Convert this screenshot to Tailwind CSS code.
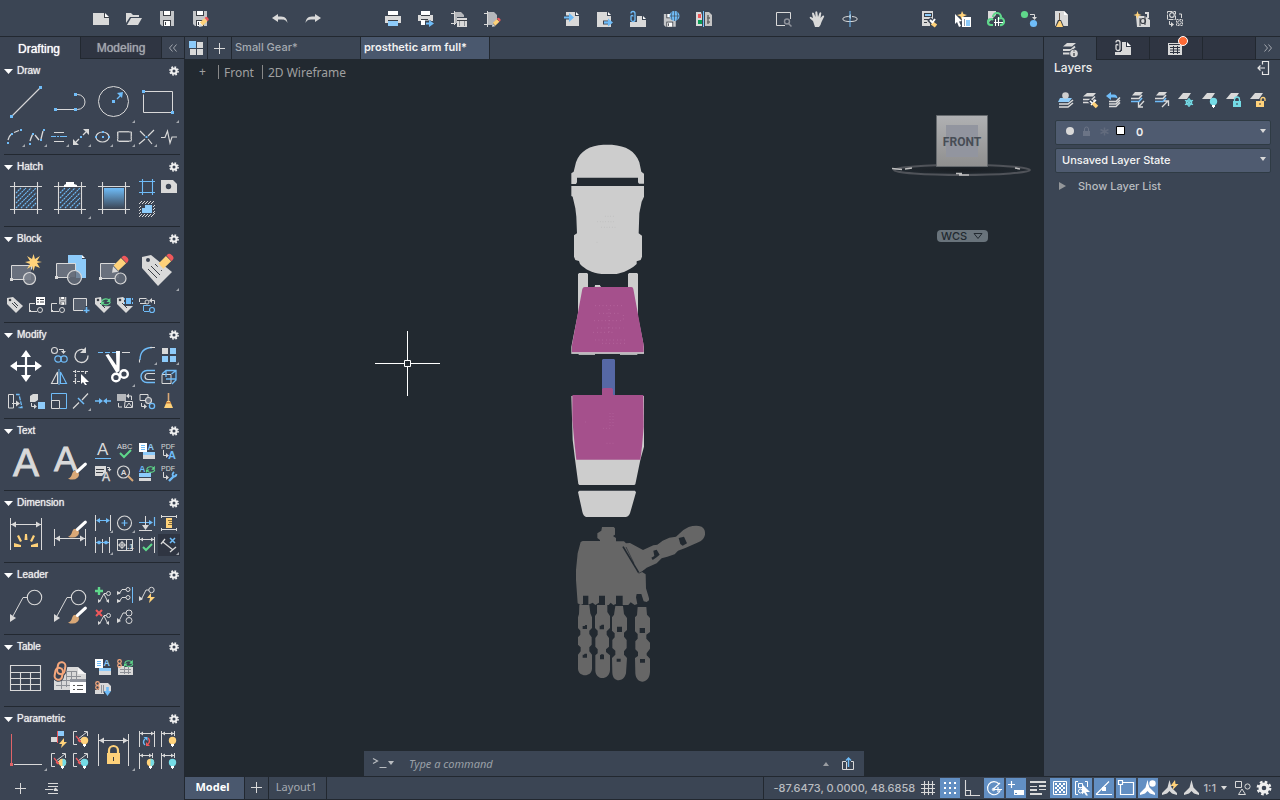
<!DOCTYPE html>
<html lang="en">
<head>
<meta charset="utf-8">
<meta name="viewport" content="width=device-width, initial-scale=1">
<title>prosthetic arm full</title>
<script src="https://cdn.jsdelivr.net/npm/@tailwindcss/browser@4"></script>
</head>
<body class="flex h-screen flex-col gap-px overflow-hidden bg-[#222830] font-['Inter','Liberation_Sans',sans-serif] text-[#d9d9d9]">

<!-- Main toolbar -->
<header id="toolbar" class="flex h-9 shrink-0 items-center justify-center gap-[47px] bg-[#3b4554] pt-0.5 pr-1"></header>

<div class="flex min-h-0 flex-1 gap-px">

  <!-- Tool palette -->
  <aside class="flex w-[184px] shrink-0 flex-col bg-[#3b4453]">
    <div class="flex h-[22px] shrink-0 font-['Liberation_Sans',sans-serif] text-xs">
      <button class="w-20 pt-px pr-0.5 text-center text-white [text-shadow:0_0_1px_#fff]">Drafting</button>
      <button class="w-[82px] border-x border-b border-[#222830] bg-[#2f3542] text-center text-[#a3a7ae] [text-shadow:0_0_1px_#a3a7ae]">Modeling</button>
      <button class="flex flex-1 items-center justify-center border-b border-[#222830]" aria-label="Collapse">
        <svg class="size-4" viewBox="0 0 16 16" fill="none" stroke="#a3a7ae"><path d="M7.500 4.500L4.500 8l3 3.500M11.500 4.500L8.500 8l3 3.500"/></svg>
      </button>
    </div>
    <div id="palette" class="flex min-h-0 flex-1 flex-col overflow-hidden px-1 font-['Liberation_Sans',sans-serif]"></div>
    <div class="flex h-6 shrink-0 items-center gap-4 bg-[#3b4453] pl-3">
      <button aria-label="Add"><svg class="size-4" viewBox="0 0 16 16" stroke="#d9d9d9"><path d="M8.500 3v11M3 8.500h11"/></svg></button>
      <button aria-label="Palette list"><svg class="size-4" viewBox="0 0 16 16" stroke="#d9d9d9" fill="#d9d9d9"><path d="M4 3.500h10M4 6.500h10M4 13.500h10M1 9.500h8M10 10.500h4"/><path stroke="none" d="M9 10h5l-2.500-2.500z"/></svg></button>
    </div>
  </aside>

  <div class="flex min-w-0 flex-1 flex-col gap-px">
    <div class="flex min-h-0 flex-1">
      <main class="flex min-w-0 flex-1 flex-col">
        <!-- File tabs -->
        <nav class="flex h-[22px] shrink-0 gap-px bg-[#222830] text-[11px]">
          <button class="flex w-[22px] items-center justify-center bg-[#3b4554]" aria-label="Start">
            <svg class="size-4" viewBox="0 0 16 16" fill="#d9d9d9"><path fill="#8dcbfa" d="M1 1h7v7H1z"/><path d="M9 2h6v6H9zM2 9h6v6H2zM9 9h6v6H9z"/></svg>
          </button>
          <button class="flex w-[23px] items-center justify-center bg-[#3b4554]" aria-label="New drawing">
            <svg class="size-4" viewBox="0 0 16 16" stroke="#d9d9d9"><path d="M7.500 3v11M2 8.500h11"/></svg>
          </button>
          <button class="w-32 bg-[#3b4554] pb-0.5 pl-[3px] text-left font-medium text-[#a5aab1]">Small Gear*</button>
          <button class="w-32 bg-[#4a586e] pb-0.5 pl-[3px] text-left font-semibold text-[#f2f2f2]">prosthetic arm full*</button>
          <div class="flex-1 bg-[#3b4554]"></div>
        </nav>

        <!-- Drawing canvas -->
        <section class="relative min-h-0 flex-1 bg-[#222930]">
          <div class="absolute top-1 left-3.5 flex h-[17px] items-center font-['Noto_Sans',sans-serif] text-xs text-[#a0a0a0]">
            <button class="w-[19px] text-left" aria-label="Viewport menu">+</button>
            <button class="h-3.5 border-l border-[#888] pr-2 pl-[5px] leading-[15px]">Front</button>
            <button class="h-3.5 border-l border-[#888] pl-[5px] leading-[15px]">2D Wireframe</button>
          </div>

          <svg class="absolute top-[272px] left-[190px] h-[66px] w-[66px]" viewBox="0 0 66 66" fill="none" stroke="#fff"><path d="M32.500 0v29M32.500 36v29M0 32.500h29M36 32.500h29M29.500 29.500h6v6h-6z"/></svg>

          <!-- Arm model -->
          <svg class="absolute top-[81px] left-[385px] h-[548px] w-[140px]" viewBox="570 140 140 548">
            <g transform="translate(540 130) scale(.33333)">
              <path fill="#cdcdcd" d="M94 130L101 125L108 97C120 62 150 46 190 44H216C258 48 286 62 298 97L304 125L312 131V161H297L294 157V143H111V157L108 162H94ZM94 168H312V200L305 215L298 250L296 310L306 317V380L302 390L290 394V402C265 425 235 432 225 432H185C155 428 135 418 120 402L117 393L106 390L102 380V316L111 310L109 260L106 235L98 200L94 198ZM114 432L118 429H141L144 432V475H162L165 465H180L184 472H264V432L268 429H291L294 432V560L312 650V670H94V650L114 550Z"/>
              <path fill="#222930" d="M144 432H264V472H184L180 465H165L162 473H144Z"/>
              <path fill="#a5508c" d="M134 471H274Q279 471 280 477L311 645V667H96V645L127 477Q129 471 134 471Z"/>
              <path stroke="#cdcdcd" stroke-width="3" d="M94 670H312M116 673H165M240 673H292"/>
              <path stroke="#c47bb1" stroke-width="2" stroke-dasharray="2 9" d="M166 527H250M178 550H240M163 572H250M172 594H250M160 607H220M165 630H260M207 537V610M250 555V570M186 640H260"/>
              <path fill="#5668a5" d="M186 690L189 687H222L225 690V800H186Z"/>
              <path fill="#a5508c" d="M186 777L190 774H215L219 778V800H186Z"/>
              <path stroke="#b5b5b5" stroke-width="2" stroke-dasharray="2 6" d="M195 259H222M172 275H225M184 292H228M170 337H178"/>
            </g>
            <g transform="translate(540 380) scale(.33333)">
              <path fill="#cdcdcd" d="M94 48H312V200L301 240L286 313L283 315H118L115 312L105 238L98 180ZM114 336L118 332H285L288 337L270 400Q266 411 256 411H138Q130 408 127 395Z"/>
              <path fill="#a5508c" d="M98 45H310L311 140L306 200L301 239H109L104 195L97 120V47Z"/>
              <path stroke="#bd73a8" stroke-width="2" stroke-dasharray="2 7" d="M210 99V140M219 99V140M190 145H215M200 190H222M136 126H145"/>
              <g fill="#666">
                <path d="M186 441H221L225 445V464L219 468L228 474V484H252L258 490L270 489L309 510L340 496L352 494L368 482L388 473L408 470L430 450L446 441Q468 434 485 440Q497 448 495 464Q492 480 475 487L436 504L414 512L404 523L382 530L365 535L350 550L320 563L305 575L317 583L318 625L327 655V661L320 666L311 664L304 642L290 642L288 652L292 672L284 675L272 667L265 675H248V647H228V672L220 675L212 668L206 675H195V647H177V668L166 675L158 668L145 674V647H129V672L122 675L113 670L108 600V570L113 520L122 486L128 483H180V480L172 474V460L184 452Z"/>
                <path d="M118 675H148L151 700L156 712V744L148 752V762L155 772V794L148 802V814L156 824V866C155 892 115 892 114 866V824L122 814V802L114 794V772L121 764V752L114 744V712L117 702ZM171 675H202V696L210 708V744L200 754V764L207 774V800L198 808V816L210 826V870C208 902 168 902 166 872V826L173 820V808L166 800V774L173 764V752L165 744V708L171 700ZM226 678H249L252 702L261 714V750L252 758V770L260 780V804L252 814V824L261 834L258 880C252 908 218 908 217 878L216 834L226 824V812L217 804V780L224 772V760L216 752V712L222 704ZM293 681H319L321 704L330 714V756L319 764V776L330 788V806L320 820V826L330 836V876C328 914 288 914 286 880L285 834L294 828V816L286 808V784L293 776V762L285 754V712L291 706Z"/>
              </g>
              <path fill="#222930" d="M128 738h6l2-3h5v12h-13zM179 737h4l2-3h7v14h-13zM231 740h15v16h-15zM299 744h16v15h-16zM128 824h4l2-3h7v12h-13zM180 826l4-3h6l2 3v12h-12zM230 836h12v9h-12zM300 837h15v11h-15zM416 474L432 470L441 490L428 497L421 492ZM340 512L350 509L359 524L350 532L338 540L334 533L343 528Z"/>
              <path stroke="#222930" stroke-width="5" d="M249 500L296 578"/>
              <path stroke="#222930" stroke-width="2" d="M258 501L282 550M296 580L352 553"/>
            </g>
          </svg>

          <!-- View cube -->
          <svg class="absolute top-[54px] right-2.5 h-[68px] w-[142px]" viewBox="0 0 142 68">
            <defs><linearGradient id="cube" x1="0" y1="0" x2="0" y2="1"><stop offset="0" stop-color="#b0b1b3"/><stop offset="1" stop-color="#8f8f8f"/></linearGradient>
            <radialGradient id="shade"><stop offset="0" stop-color="#1a1e23"/><stop offset="1" stop-color="#222930"/></radialGradient></defs>
            <ellipse cx="71" cy="57" rx="68" ry="5" fill="url(#shade)" stroke="#505359" stroke-width="2"/>
            <path stroke="#bdbdbd" stroke-width="1.500" d="M1 55.500l10 1M14 56l7-1M68 62h10M65 60.500h6M124 55l5 1"/>
            <path fill="url(#cube)" stroke="#666a6e" d="M45.500 2.500h51v51h-51z"/>
            <path fill="#92959f" d="M55 12h32v32H55z"/>
            <text x="71" y="33" text-anchor="middle" font-family="Roboto, sans-serif" font-size="12" font-weight="700" fill="#474d55">FRONT</text>
          </svg>
          <button class="absolute top-[171px] right-[55px] flex h-3 w-[51px] items-center justify-between rounded bg-[#69737b] pr-1 pl-1 text-[11px] font-medium text-[#222930]">WCS
            <svg class="h-2 w-3" viewBox="0 0 12 8" fill="none" stroke="#222930"><path d="M2 1.500h8L6 6.500z"/></svg>
          </button>

          <!-- Command line -->
          <div class="absolute bottom-0 left-1/2 flex h-[25px] w-[500px] -translate-x-1/2 items-center bg-[#3b4554] pr-2 pl-2">
            <button aria-label="Recent commands"><svg class="h-4 w-6" viewBox="0 0 24 16" fill="none" stroke="#b9bcc0"><path d="M1 2.500l4.500 2.500L1 7.500M7.500 11.500h7" stroke-width="1.200"/><path fill="#b9bcc0" stroke="none" d="M16 5h6l-3 4z"/></svg></button>
            <input aria-label="Command" placeholder="Type a command" class="ml-3 min-w-0 flex-1 bg-transparent pt-0.5 pl-px font-['Noto_Sans',sans-serif] text-[11px] italic outline-none placeholder:text-[#9aa0a7]">
            <button class="mr-2.5" aria-label="History"><svg class="h-2 w-2" viewBox="0 0 8 8" fill="#9a9da2"><path d="M1 6h6L4 2z"/></svg></button>
            <button aria-label="Share"><svg class="size-4" viewBox="0 0 16 16" fill="none" stroke="#d9d9d9"><path d="M6 5.500H2.500v8h11v-8H11M6.500 6v8"/><path stroke="#6fbcf8" stroke-width="1.400" d="M8.500 11V2M6 4.500L8.500 2 11 4.500"/></svg></button>
          </div>
        </section>
      </main>

      <!-- Layers panel -->
      <aside class="flex w-[237px] shrink-0 flex-col border-l border-[#222830] bg-[#3b4554]">
        <div class="flex h-[23px] shrink-0">
          <button class="flex w-[52px] items-center justify-center pt-0.5" data-icon="layerInfo" aria-label="Layers"></button>
          <button class="flex w-[53px] items-center justify-center border-b border-l border-[#222830] bg-[#2f3542]" data-icon="refs" aria-label="References"></button>
          <button class="relative flex w-[53px] items-center justify-center border-b border-l border-[#222830] bg-[#2f3542] pr-0.5" data-icon="sheet" aria-label="Sheets"></button>
          <div class="flex-1 border-b border-l border-[#222830] bg-[#2f3542]"></div>
          <button class="flex w-[25px] items-center justify-center border-b border-l border-[#222830]" aria-label="More">
            <svg class="size-4" viewBox="0 0 16 16" fill="none" stroke="#a3a7ae"><path d="M4.500 4.500L7.500 8l-3 3.500M8.500 4.500l3 3.500-3 3.500"/></svg>
          </button>
        </div>
        <div class="flex h-4 items-center justify-between pr-[9px] pl-2.5">
          <h2 class="text-xs font-medium text-[#ececec]">Layers</h2>
          <button aria-label="Undock"><svg class="size-4" viewBox="0 0 16 16" fill="none" stroke="#e6e6e6"><path d="M7.500 4.500V1.500H13.500v13H7.500V11.500M3 8H10M5.500 5.500L3 8 5.500 10.500" stroke-width="1.200"/></svg></button>
        </div>
        <div id="layerTools" class="mt-3 flex h-6 pl-2.5"></div>
        <div class="relative mt-1.5 mr-[9px] ml-[11px] h-[25px]">
          <select aria-label="Current layer" class="h-full w-full appearance-none rounded-xs border border-[#2f3b44] bg-[#4f5b70] pl-20 text-[11px] font-semibold text-[#f0f0f0]"><option>0</option></select>
          <svg class="pointer-events-none absolute top-[5px] left-2 h-4 w-16" viewBox="0 0 64 16" fill="none"><circle cx="7" cy="8" r="4" fill="#d9d9d9"/><path fill="#6b7486" d="M20 8h7v5h-7z"/><path stroke="#6b7486" d="M21.500 8V6a2 2 0 0 1 4 0v2"/><path stroke="#626b7d" stroke-width="1.500" d="M41.500 4.500v8M37.500 6.500l8 4M37.500 10.500l8-4"/><path fill="#fff" stroke="#000" d="M53.500 3.500h8v8h-8z"/></svg>
          <svg class="pointer-events-none absolute top-[11px] right-1 h-1.5 w-2" viewBox="0 0 8 6" fill="#d9d9d9"><path d="M1 0h6L4 4z"/></svg>
        </div>
        <div class="relative mt-[3px] mr-[9px] ml-[11px] h-[25px]">
          <select aria-label="Layer state" class="h-full w-full appearance-none rounded-xs border border-[#2f3b44] bg-[#4f5b70] pb-px pl-1.5 text-[11px] font-medium text-[#f5f5f5]"><option>Unsaved Layer State</option></select>
          <svg class="pointer-events-none absolute top-[11px] right-1 h-1.5 w-2" viewBox="0 0 8 6" fill="#d9d9d9"><path d="M1 0h6L4 4z"/></svg>
        </div>
        <button class="mt-1.5 flex h-[18px] items-center gap-3 pl-3.5 text-[11px] font-medium text-[#b9bcc0]">
          <svg class="size-2" viewBox="0 0 8 8" fill="#94979a"><path d="M1 0v8l7-4z"/></svg>Show Layer List
        </button>
      </aside>
    </div>

    <!-- Layout tabs and status bar -->
    <footer class="mb-px flex h-[22px] shrink-0 gap-px font-['Noto_Sans',sans-serif] text-[11px]">
      <button class="w-[59px] bg-[#4a586e] pr-1 pb-0.5 font-bold text-white">Model</button>
      <button class="flex w-[23px] items-center justify-center bg-[#3b4554]" aria-label="New layout"><svg class="size-4" viewBox="0 0 16 16" stroke="#d9d9d9"><path d="M7.500 2v11M2 7.500h11"/></svg></button>
      <button class="w-[57px] bg-[#3b4554] pr-0.5 pb-0.5 text-[#a5aab1]">Layout1</button>
      <div class="flex-1 bg-[#3b4554]"></div>
      <div class="flex items-center bg-[#3b4554] pr-2 pl-2.5 font-['Inter',sans-serif] font-medium text-[#b9bcc0]">
        <span class="w-[144px] whitespace-nowrap">-87.6473, 0.0000, 48.6858</span>
        <div id="status" class="flex gap-0.5"></div>
        <button class="mr-1.5 ml-0.5 flex items-center gap-1 text-[11px]">1:1<svg class="h-1.5 w-2" viewBox="0 0 8 6" fill="#d9d9d9"><path d="M1 1h6L4 5z"/></svg></button>
        <button class="mr-1.5" data-icon="shapes" aria-label="Isolate objects"></button>
        <button data-icon="gear16" aria-label="Customize"></button>
      </div>
    </footer>
  </div>
</div>

<script>
const W='#d9d9d9',B='#6fbcf8',P='#8dcbfa',Y='#ffd27a',G='#5fd88b',R='#f0585b',C='#74dbe6',D='#3b4453',H='#ffffff',M='#8e929b',K='#3b3f46',T='#d9a877',O='#f5a77c';
// Drawing primitives: filled path, stroked path, ring, disk, rectangle, text
const p=(c,d)=>`<path fill="${c}" d="${d}"/>`;
const s=(c,d,w=1,x='')=>`<path fill="none" stroke="${c}" stroke-width="${w}" d="${d}" ${x}/>`;
const o=(c,x,y,r,w=1,f='none')=>`<circle cx="${x}" cy="${y}" r="${r}" fill="${f}" stroke="${c}" stroke-width="${w}"/>`;
const k=(c,x,y,r)=>`<circle cx="${x}" cy="${y}" r="${r}" fill="${c}"/>`;
const r=(c,x,y,w,h)=>`<rect x="${x}" y="${y}" width="${w}" height="${h}" fill="${c}"/>`;
const q=(x,y)=>r(B,x,y,3,3), q2=(x,y)=>r(B,x,y,2,2);
const t=(c,x,y,z,v,w=400,b=0)=>`<text x="${x}" y="${y}" font-size="${z}" font-weight="${w}" fill="${c}" stroke="${c}" stroke-width="${b}" font-family="Liberation Sans, sans-serif">${v}</text>`;
const at=(x,y,z,g)=>`<g transform="translate(${x} ${y}) scale(${z})">${g}</g>`;
const pencil=p(W,'M0 16l1-6 5 5z')+p(Y,'M1.500 9L8.500 2l5 5L6 14z')+p(R,'M9 1.500L10.500 0Q12 -1 14 1l1 1q1.500 2 0 3.500L14 7z');
const brush=p(T,'M0 15q3-1 4-5t5-2q3 3 0 6t-9 1z')+s(H,'M9 8L16.500 1',3,'stroke-linecap="round"');
const page=p(W,'M2 1h9v4h4v10H2z')+p(H,'M12 1l3 3h-3z');
const floppy=p('#c4c6c9','M1 0h14v15H3l-2-2z')+r(K,4,0,8,5)+r(H,5,0,6,4)+r(K,4,9,8,6)+r(H,5,10,6,5)+r(K,6,11,1,3);
const bulb=(c,h='')=>k(c,11.5,9.5,3.7)+h+r(H,10,13,3,2)+r(H,11,14,1,2);
const half=p(C,'M11.500 5.800a3.700 3.700 0 0 1 0 7.400z');
const tag=p(W,'M0 1l6-1 10 9-7 7L0 7z')+k(K,3,3,1.3)+s(K,'M5 6l5 5M7 5l4 4');
const refresh=s(G,'M1 5a5 4 0 0 1 9-1M11 6a5 4 0 0 1-9 1.500',1.4)+p(G,'M11 1v5H6.500zM0 10V5.500h4.500z');
const clip=c=>s(c,'M1 2.500a2 2 0 0 1 4 0v6a2 2 0 0 1-4 0v-3a1 1 0 0 1 2 0',1.3);
const stack=p(W,'M5 1h9l-3 3.500H1z')+s(W,'M1 7.500h9l3-3M1 10.500h9l3-3',1.6);
const frame=s(W,'M0 4.500h32M0 27.500h32M4.500 0v32M27.500 0v32',1.1);
const hatch=s(B,'M6 11l5-5M6 16L16 6M6 21L21 6M6 26L26 6M11 26l15-15M16 26l10-10M21 26l5-5',1.1,'stroke-dasharray="2 .6"');
const dimTop=s(W,'M.500 0v16M15.500 0v16')+s(W,'M1 2.500h14')+p(W,'M1 2.500l3-2v4zM15 2.500l-3-2v4z');
const gearRing=(x,y,z)=>`<g transform="translate(${x} ${y}) scale(${z})"><circle r="2.700" fill="none" stroke="#f0f0f0" stroke-width="2.200"/><circle r="4.300" fill="none" stroke="#f0f0f0" stroke-width="1.600" stroke-dasharray="1.800 1.577"/></g>`;
const anno='M7.500 0L9.500 7.500 15 13v2l-5-1.500L7.500 11 5 13.500 0 15v-2L5.500 7.500z';

const icons={
 // toolbar
 newFile:p(W,'M0 2h12v4h4v8H0z')+p(H,'M12 2l4 4h-4z')+p(K,'M11 2h1v4h4v1h-5z'),
 open:p(W,'M0 2h5l2 2h6v2H4L0 12z')+p(W,'M5 7h11l-4 7H1z'),
 save:floppy,
 saveAs:floppy+at(7,6,.62,pencil),
 undo:p(W,'M0 7l6-4v2.500h3c5 0 6 3 6.500 6.500-1.500-3-3-3.500-6.500-3.500H6V11z'),
 redo:p(W,'M16 7l-6-4v2.500H7c-5 0-6 3-6.500 6.500 1.500-3 3-3.500 6.500-3.500h3V11z'),
 print:p(H,'M3 0h10v5H3z')+p(W,'M0 5h16v7H0z')+r(K,3,4,10,1)+r(K,3,9,10,1)+p(P,'M3 10h10v5H3z'),
 batch:p(H,'M3 0h9v4H3z')+p(W,'M0 4h15v6H0z')+r(K,3,4,9,1)+r(K,3,8,7,1)+r(H,3,9,7,5)+s(D,'M7 12h6',5)+s(B,'M8 12.500h5',2)+p(B,'M11 9l5 3.500-5 3.500z'),
 pageSetup:s(W,'M0 2.500h10M3.500 0v14M0 12.500h5')+p('#b5b7bb','M4 1h6l3 3v2H6v6H4z')+p(W,'M6 7h10v9H6z')+r(K,6,9,10,1)+s('#8a8d92','M8.500 10v5M13.500 10v5'),
 plotStyle:s(W,'M0 2.500h10M3.500 0v16M0 13.500h8')+p('#b5b7bb','M4 1h6l3 3v4l-5 6H4z')+at(8,7,.55,pencil),
 importF:page+s(D,'M0 6.500h7',4)+s(B,'M0 6.500h6',2)+p(B,'M5 2l5 4.500-5 4.500z'),
 exportF:p(W,'M0 1h10v4h4v11H0z')+p(H,'M11 1l3 3h-3z')+s(D,'M6 11.500h6',4)+s(B,'M7 11.500h5',2.4)+p(B,'M11 7.500l5 4-5 4z'),
 attach:p(W,'M0 11h7V5h5v4h4v7H0z')+p(H,'M13 5l3 3h-3z')+clip(B),
 webSave:at(0,3,.85,floppy)+k(B,11.5,5,5)+s(K,'M7 5h9M11.500 0v10M9 1q-1.500 4 0 8M14 1q1.500 4 0 8',.6),
 compare:p(W,'M0 1h5l1 3v11H0z')+p('#c4c4c4','M9 1h4l3 3v11H9z')+r(R,2,3,3,4)+r('#0a9b55',2,9,4,4)+s(B,'M7.500 0v16')+s('#666','M11 7h3M11 11h3M12 4v9',1.5),
 zoomWin:s(W,'M14.500 8V1.500H.500v13H9')+s(M,'M12 12l3.500 3.500',1.5)+o(M,11,10.5,2.5,1.4),
 hand:p(W,'M4 10L1 7.500Q0 6 1.500 5.800L4 7 3 2.500Q3.500 1 4.800 2L6.500 6 6.300 1Q7.300-.5 8.300 1L9 6l1.500-4.300Q11.800.7 12.300 2L11.500 7l2-2.200q1.500-.8 1.700.6L12.500 11q-1 4-2.500 5H6z'),
 orbit:s(W,'M6 10.500C-1 10-1 6 6 5.500M10 5.500c7 .500 7 4.500 0 5H6')+p(W,'M9 3v5l-3-2.500z')+s(B,'M8 0v16'),
 propsEdit:p(W,'M0 0h11v9l-3 3v3H0z')+r(K,2,2,8,4)+r(P,3,3,6,2)+s(K,'M2 8.500h5M2 11.500h3')+s(D,'M7 8l8 8',5)+s(Y,'M10 12l4 3',4)+s(H,'M8 9l3 3M13 8l-3 4',2),
 quickSel:p(Y,'M7 0l1.500 3L12 4 8.500 5.500 7 9 5.500 5.500 2 4l4-1z')+p(H,'M0 3l7 7-3 .500L6 15l-2 1-2-5-2 2z')+r(H,7,6,9,10)+r(P,11,9,4,6)+s(M,'M9.500 8v7'),
 cloud:p(W,'M0 0h8v4L1 11H0z')+s(G,'M5 14H3a2.500 2.500 0 0 1 0-6q1 0 2 1M5 6a4 4 0 0 1 8 0M12 14a3.500 3.500 0 0 0 1-7q-2 0-3 1.500',2.2)+s(H,'M7.500 8v7M10.500 6v9M6 11.500h9',1.1),
 swapObj:k(G,3.5,3.5,3.6)+k(B,12.5,12.5,3.6)+s(W,'M9 3.500h4.500V7')+p(W,'M11 6h5l-2.500 3z'),
 purge:p(W,'M1 0h9l4 4v11H1z')+p(H,'M10 0l4 4h-4z')+r('#6d5a4a',5,2,1,7)+p(K,'M4 9h3l3 7H1z')+p(Y,'M5 10h1.500l2.500 6H2z'),
 magic:p(W,'M2 5h9l5 4v7H3z')+s(K,'M6 7v8M11 5v9',1)+o(K,9,10,2.5,1.2)+p(Y,'M3.500 0l1 3 3 1-3 1-1 3-1-3-3-1 3-1z')+s(W,'M11 2h3v5',2),
 findRep:s(W,'M.500.500h8v8h-8z',1,'stroke-dasharray="5 1"')+s(W,'M9.500 8.500h6v6h-6z',1,'stroke-dasharray="2 1"'),
 // draw
 line:s(W,'M2 30L30 2',1.1)+q(0,29)+q(29,0),
 pline:s(W,'M2 23.500h19M22 8.500h1.500a7.500 7.500 0 0 1 0 15H22')+q(0,22)+q(20,22)+q(20,7),
 circle:o(W,15.5,15.5,15)+q(14,14)+s(B,'M19 13l4-4',1.2)+p(B,'M25 6l-1 6-5-5z'),
 rect:s(W,'M2.500 5.500h28v21h-29v-18')+q(0,4)+q(29,25),
 arc:s(W,'M1 11q1-4 3.500-6M7 3.500L12 1.500',1.3)+q2(0,13)+q2(4,4)+q2(13,0),
 spline:s(W,'M1 12Q3 6 4 5M6 6l4 5M12 10l2-8',1.3)+q2(0,14)+q2(3,4)+q2(11,10)+q2(14,0),
 cline:s(W,'M3 3.500h10M3 12.500h10')+s(B,'M0 7.500h5M6 7.500h2M9 7.500h7'),
 ray:s(W,'M3 13L6 10M10 6l3-3',1.3)+p(W,'M0 16V10l6 6zM16 0v6l-6-6z')+q2(7,7),
 ellipse:`<ellipse cx="7.500" cy="8" rx="6.500" ry="5" fill="none" stroke="${W}" stroke-width="1.200"/>`+q2(0,7)+q2(13,7)+q2(7,2)+q2(7,7),
 rcloud:s(W,'M2 3q1-1 2 0 1-1 2 0 1-1 2 0 1-1 2 0 1-1 2 0h2q1 1 0 2 1 1 0 2 1 1 0 2 1 1 0 3h-2q-1 1-2 0-1 1-2 0-1 1-2 0-1 1-2 0-1 1-2 0H1q-1-1 0-3-1-1 0-2-1-1 0-2-1-1 0-2z',1.1),
 trimx:s(W,'M1 2l5 5M9 7l6-6M0 15l6-5M9 10l4 5',1.2)+q2(6.5,7),
 breakl:s(W,'M0 8.500h4L6.500 2 9 14l2-6h5',1.2),
 // hatch
 hatch:frame+hatch,
 hatchEdit:frame+hatch+r(D,11,2,11,4)+p(H,'M12 2V0h8v2l3 1v2H10V3z'),
 gradient:frame+`<defs><linearGradient id="gr" x1="0" y1="0" x2="0" y2="1"><stop offset="0" stop-color="#6fbcf8"/><stop offset="1" stop-color="#3b4453"/></linearGradient></defs>`+r('url(#gr)',6,6,20,21),
 bound:s(B,'M0 2.500h16M0 13.500h16M3.500 0v16M13.500 0v16',1.1),
 region:p(W,'M0 1h12l4 4v9H0z')+k(D,7.5,7.5,2.7),
 wipe:s(W,'M0 3l3-3M3 3l3-3M6 3l3-3M9 3l3-3M12 3l3-3M0 7l2-2M0 10l2-2M0 13l2-2M0 16l3-3M3 16l3-3M6 16l3-3M9 16l3-3M12 16l4-4M14 6l2-2M14 9l2-2M14 12l2-2',1)+p(P,'M3 7h3V4h7v8H3z'),
 // block
 insert:r('#69707d',1,12,20,14)+s(W,'M1.500 25V11.500h20v4M2 25.500h13')+r(W,0,24,3,3)+o(W,19.5,24.5,6,1.2,'#858a94b0')+p(Y,'M23.500 0l1.500 5 5-3-3 5 5 1-5 1 3 5-5-2-1.500 5-1.500-5-5 3 3-5-5-2 5-1-3-5 5 3z'),
 create:p(P,'M14 1h14v4h4v19H22V10h-8z')+p('#fff','M28 1l3 3h-3z')+r('#69707d',3,10,18,13)+s(W,'M2.500 23V9.500h19v7M3 23.500h13')+r(W,1,22,3,3)+o(W,20.5,23.5,7,1.2,'#69707dc0'),
 editBlk:r('#69707d',2,10,19,14)+s(W,'M2.500 24V9.500h15M3 24.500h14')+r(W,1,23,3,3)+o(W,22.5,24.5,5.5,1.2,'#69707dc0')+at(14,2,1.05,pencil),
 editAttr:p(W,'M0 3l9-2 21 17-14 14L0 14z')+k(D,6,6,2)+s(K,'M6 15l9 9M9 12l9 9M13 10l7 7')+at(15,0,1.05,pencil),
 tag,
 blkPal:s(W,'M.500 14V6.500H6M1 14.500h7')+o(W,11,13,2.5,1)+r(H,7,0,9,8)+s(K,'M8 2.500h2M11 2.500h4M8 5h2M11 5h4')+r(W,0,13,2,2),
 blkSave:s(W,'M.500 14V6.500H6M1 14.500h7')+o(W,11,13,2.5,1)+at(7.5,0,.52,floppy)+r(W,0,13,2,2),
 base:s(W,'M10 13.500H.500V1.500h13V9')+r('#565e6c',1,2,12,11)+s(D,'M13.500 9v7M10 13.500h6',3)+s(B,'M13.500 10v6M10.500 13.500h6',1.6),
 sync:tag+at(6,0,.85,p(D,'M0 0h12v11H2z')+refresh),
 attrM:tag+r(D,7,0,9,9)+r(B,9,1,5,6)+s(B,'M7.500 1v2M7.500 5v2M15.500 1v2M15.500 5v2',1),
 repl:s(W,'M.500 5V1.500h7M1 6.500h6')+o(W,8,5,2,1)+s(W,'M15.500 7V3.500h-3')+p(W,'M13 1v5l-3-2.500z')+s(B,'M4.500 14V8.500h7M5 14.500h5')+o(B,13,13,2.5,1.2),
 // modify
 move:s(H,'M16 4v24M4 16h24',2.2)+p(H,'M16 0l5 7h-10zM16 32l5-7h-10zM0 16l7-5v10zM32 16l-7-5v10z'),
 copy:o(W,3.5,3.5,3,1.1)+o(B,7,12,3.2,1.2)+o(B,13,12,3.2,1.2)+s(W,'M8 2.500h4.500V5')+p(W,'M10 4h5l-2.500 3z'),
 rotate:s(W,'M12 3.500A6.500 6.500 0 1 0 15 8.500',1.3)+p(W,'M13 0v6H7z'),
 scissors:s(B,'M0 2.500h18',1,'stroke-dasharray="5 2"')+s(W,'M24 2.500h8')+p(H,'M7.500 5l3-1 11 16-3 3zM18 1h4l-.5 20-3 2z')+o(H,18,27.5,3.8,2.4)+o(H,26,24,3.8,2.4),
 fillet:s(B,'M1 13Q1 1 13 .500',1.3)+s(W,'M.500 15.500v-3M11 .500h5',1.1),
 array:r(W,1,1,6,6)+r(P,9,1,6,6)+r(P,1,9,6,6)+r(P,9,9,6,6),
 mirror:s(W,'M6.500 3v11.500H.500z',1.1)+s(B,'M9.500 3v11.500h6z',1.1)+s(B,'M8 0v16'),
 stretch:s(W,'M2.500 1v14M12.500 2v3M0 2.500h15M0 12.500h8',1.2,'stroke-dasharray="3 1"')+p(H,'M8 5l8 8h-4l2 3h-2l-2-3-2 2z'),
 offset:s(B,'M16 1.500H8a6 6 0 0 0 0 12h8',1.4)+s(W,'M16 4.500H9a3 3 0 0 0 0 6h7',1.2),
 box:s(W,'M1 5.500h9v9H1z')+s(B,'M1 5l4-3.500h10V11l-4 4M10.500 5l4.500-3.500M5 8V2M5 10h10',1.3),
 skew:s(W,'M1.500 15V1.500h5v13.500zM5 10.500h6')+p(W,'M9 7.500v6l4-3z')+s(B,'M9 1.500h3l3 13h-4',1.3,'stroke-dasharray="4 1"'),
 align:p(W,'M1 3l3-2h5v6L6 9H1z')+r(P,9,9,7,7)+s(W,'M2.500 10v3.500H6')+p(W,'M5 11v5l3-2.500z'),
 scale:s(B,'M.500 15V.500h15v15H9')+s(W,'M.500 7.500h8v8H.500z'),
 trimS:s(W,'M0 15.500L6 9.500M9 7l6-6.500',1.2)+s(B,'M5 5l6 6',1.5),
 join:s(B,'M0 8h5M11 8h5',1.4)+p(B,'M4 5l4 3-4 3zM12 5L8 8l4 3z'),
 order:r('#b5b7bb',0,1,9,7)+s(W,'M8 8.500h7.500v6H7.500zM9 14l3-4 3 4M11 3h3.500V7M1.500 10v4H5')+p(W,'M9 3l3-2.500v5z'),
 explode:s(W,'M1 1.500h8v6H1z')+o(W,9.5,7.5,3,1.1,'#69707d')+o(B,13,13,2.6,1.3)+s(W,'M2.500 10v3.500H6')+p(W,'M5 11v5l3-2.500z'),
 broom:s(T,'M7.500 0v9',1.6)+p(Y,'M6 8h3l3 7H3z')+r('#c87f3c',5,9,5,1.5),
 // text
 bigA:t(W,3,30,39,'A',400,.9),
 styleA:t(W,0,25,35,'A',400,.9)+at(14,17,1.05,p(D,'M-1 17q3-1 4-7l3-3 6 3v7z')+brush),
 under:t(W,2,12,17,'A')+s(B,'M0 15.500h16'),
 abc:t(W,0,6,7.5,'ABC')+s(G,'M3 10l4 4 7-7',2),
 tStyle:r(H,0,0,8,9)+s(B,'M2 2.500h4M2 4.500h4M2 6.500h4')+t(P,8.5,7,9,'A',700)+r(P,4,9,12,3)+r(W,4,12,12,4),
 pdfA:t(W,0,6,7,'PDF')+s(W,'M2.500 7v5.500H5')+p(W,'M5 10v5l3-2.500z')+t(B,7,16,11,'A',700),
 mtext:p(W,'M0 1h11v6L7 11H0z')+s(K,'M1 4.500h8M1 7.500h7')+s(W,'M12 2.500h2.500V5')+p(W,'M12.500 4h4l-2 2.500z')+t(W,7,16,12,'A',400,.4),
 find:o(W,6.5,7,6,1.2)+t(W,3.7,10.2,8,'A',700)+s(T,'M11 11l5 5',2),
 tRef:t(B,0,7,9,'A',700)+at(7,0,.8,refresh)+r(P,0,8,12,4)+r(W,0,13,12,3),
 pdfW:t(W,0,6,7,'PDF')+s(W,'M2.500 7v5.500H5')+p(W,'M5 10v5l3-2.500z')+s(B,'M8 16l5-5',2.4)+s(B,'M13 7q-3 3 0 4.500 2 0 2.500-2.500',1.8),
 // dimension
 dimBig:s(W,'M.500 0v32M31.500 0v32M1 6.500h30')+p(W,'M1 6.500l5-3v6zM31 6.500l-5-3v6z')+p(Y,'M15 16h2l.500 6h-3zM7 18l2-1 3 6-2 1zM25 18l-2-1-3 6 2 1zM4 25l7 2v2H4zM28 25l-7 2v2h7z'),
 dimBrush:s(W,'M.500 11v17M31.500 11v17M1 20.500h30')+p(W,'M1 20.500l5-3v6zM31 20.500l-5-3v6z')+at(14,3,1.05,brush),
 dimLin:s(W,'M.500 0v16M15.500 0v16')+s(B,'M3 5.500h10')+p(B,'M1 5.500l4-2.500v5zM15 5.500l-4-2.500v5z'),
 dimDia:o(W,7.5,8,7,1.1)+s(B,'M7.500 5v6M4.500 8h6',1.2),
 dimOrd:s(B,'M0 7.500h11M15.500 2v9',1.2)+p(B,'M10 5v5l4-2.500z')+s(W,'M6.500 1v13M0 15.500h13')+p(W,'M3 10h7l-3.500 5z'),
 dimTot:s(W,'M0 1.500h16M0 14.500h16M.500 0v3M15.500 0v3M.500 13v3M15.500 13v3')+r(Y,5,3,6,10)+s('#806a3e','M7 5.500h4M8 7.500h3M7 9.500h4'),
 dimCont:s(W,'M.500 0v16M7.500 2v14M14.500 0v16')+s(B,'M1 5.500h13')+p(B,'M1 5.500l3-2v4zM7 5.500l-3-2v4zM8 5.500l3-2v4zM14 5.500l-3-2v4z'),
 tol:s(W,'M0 2.500h15.500v11H.500v-11M9.500 3v10')+o(W,5,8,2.5)+s(W,'M5 4v8M1 8h8')+t(W,10,11.5,8,'.1',700),
 dimChk:dimTop+s(G,'M4 10l3 3 6-6',2),
 dimX:s(W,'M2 5l10 8M0 7l4-5M9 15l6-5',1.3)+s(B,'M9 1l5 5M14 1L9 6',1.5),
 // leader
 lead:o(W,24.5,7.5,7.2,1.1)+s(W,'M18 7.500h-5L3 26')+p(W,'M0 32V24l6 4z'),
 leadB:o(W,24.5,7.5,7.2,1.1)+s(W,'M18 7.500h-5L3 26')+p(W,'M0 32V24l6 4z')+at(14,17,1.05,brush),
 lAdd:s(G,'M4 0v8M0 4h8',2.4)+o(W,13.5,6.5,2)+s(W,'M11 6.500H9L5 14M9 7l4 8')+p(W,'M3 16v-4l3 2zM14 16l-3-2 3-2z'),
 lAlign:o(W,11,2.5,2)+o(W,11,10.5,2)+s(W,'M9 2.500H5L2 7M9 10.500H5L2 15')+p(W,'M0 8V4l4 2zM0 16v-4l4 2z')+s(B,'M15.500 0v16'),
 lBolt:o(W,12.5,3,2.7)+s(W,'M10 3H7L2 13')+p(W,'M0 14V9l4 3z')+p(Y,'M12 6l-4 5h3l-1 5 6-6h-4z'),
 lDel:s(R,'M1 1l6 6M7 1L1 7',2)+o(W,13.5,6.5,2)+s(W,'M11 6.500H9L5 14M9 7l4 8')+p(W,'M3 16v-4l3 2zM14 16l-3-2 3-2z'),
 lCol:o(W,12,4,3)+o(W,12,11.5,3)+s(W,'M9 4H6L2 12')+p(W,'M0 14V9l4 3z'),
 // table
 table:s(W,'M.500 3.500h30v25H.500zM1 10.500h30M1 16.500h30M1 22.500h30M10.500 11v17M20.500 11v17',1.1),
 tblLink:p(W,'M0 16h8V5h16v6h8v17H0z')+p('#f4f4f4','M24 5l8 7h-8z')+s('#8d9096','M2 18.500h14M2 23.500h14M13 9.500h10M13 14.500h14M12.500 10v15M17.500 10v8M22.500 10v8M7.500 18v9')+r(H,16,17,16,14)+r(M,16,17,16,3)+s('#555','M19 23.500h2M19 27.500h2M23 23.500h6M23 27.500h6')
  +`<g fill="none" stroke="${D}" stroke-width="4" transform="rotate(10 6 9)"><rect x="3" y="0" width="7.500" height="12" rx="3.700"/><rect x="1.500" y="6" width="7.500" height="12" rx="3.700"/></g><g fill="none" stroke="${O}" stroke-width="2" transform="rotate(10 6 9)"><rect x="3" y="0" width="7.500" height="12" rx="3.700"/><rect x="1.500" y="6" width="7.500" height="12" rx="3.700"/></g>`,
 tblXtr:r(W,1,7,15,9)+s('#8d9096','M3 10.500h11M3 13.500h11M7.500 8v7M11.500 8v7')+o(O,2.5,2.5,1.8,1.2)+o(O,2.5,6.5,1.8,1.2)+at(7,0,.8,p(D,'M0 0h12v10H0z')+refresh),
 tblDn:p(W,'M0 9h4V2h9l3 3v5H9v3H0z')+s('#8d9096','M6.500 4v8M8.500 4v8')+s(B,'M12.500 6v5',2.6)+p(B,'M9 10h7l-3.500 5z')+o(O,2.5,2.5,1.8,1.2)+o(O,2.5,6.5,1.8,1.2),
 // parametric
 lcon:s('#e06468','M1.500 0v29')+r('#e06468',0,29,3,3)+s(W,'M4 30.500h28'),
 pAuto:r(P,6,0,7,5)+r(W,0,6,6,5)+s(R,'M6.500 0v12')+p(Y,'M13 7L8 13h3l-1 4 6-6h-3z'),
 pShow:s(W,'M4 .500H.500v13H4M11 .500h3.500V5M11 6l-4 3M5 8L14 1')+s(R,'M3 5l5 6M5 9l2 2',1.2),
 lockBig:s(W,'M.500 0v32M30.500 0v32M1 6.500h29')+p(W,'M1 6.500l5-3v6zM30 6.500l-5-3v6z')+r(Y,9,19,13,11)+s(Y,'M11 19v-2.500a4.500 4.500 0 0 1 9 0V19',2.2)+r(K,15,23,1,4),
 pCyc:dimTop+s(B,'M6 14q-3-3 0-6',1.4)+s(R,'M9 7q3 3 0 6',1.4)+p(B,'M4.500 6h4v4z')+p(R,'M7 11v4h4z'),
 pDim:s(W,'M.500 0v16M13.500 0v5M1 2.500h12')+p(W,'M1 2.500l3-2v4zM13 2.500l-3-2v4z'),
 // layers
 lyMk:p(P,'M2 6h12l-3 4H0z')+k('#cfcfcf',7.5,3.5,3.3)+s(W,'M1 12h9l5-4M1 15h9l5-4',1.6),
 lyMatch:stack+s(D,'M7 8l8 8',4)+s(H,'M9 13l5-5M8 9l3 3',1.6)+s(Y,'M11 11l4 4',3.6),
 lyPrev:p(B,'M0 4l5-4v2.500h3q3 0 3.500 4Q10 5.500 8 5.500H5V8z')+s(W,'M3 9.500h7l4-4M3 12h7l4-4M3 14.500h7l4-4',1.5),
 lyIn:p(W,'M5 0h8l-3 3.500H2z')+s(W,'M1 6.500h8l3-3.500',1.6)+s(B,'M1 9.500h8l3-3.500',1.6)+s(W,'M14 9l-5 5.500M8.500 10v5H13',1.3),
 lyOut:p(W,'M5 0h8l-3 3.500H2z')+s(W,'M1 6.500h8l3-3.500',1.6)+s(B,'M1 9.500h8l3-3.500',1.6)+s(W,'M8 15l5.500-5.500M10 9h4.500v5',1.3),
 ly1:p(W,'M5 1h8L9 7H0z'),
};
icons.findRep+=o(W,5,4,2.3,1.2)+o(W,12.5,11.5,1.8)+s(W,'M12 3h2.500v4')+s(W,'M2.500 10v3.500H5')+p(W,'M4 11v5l3-2.500z');
icons.pY=icons.pShow+bulb(Y); icons.pC=icons.pShow+bulb(C); icons.pH=icons.pShow+bulb(Y,half);
icons.dY=icons.pDim+bulb(Y); icons.dC=icons.pDim+bulb(C); icons.dH=icons.pDim+bulb(Y,half);
icons.lyFrz=icons.ly1+s(C,'M11 6v9M7 8.300l8 4.400M7 12.700l8-4.400',1.3)+o(C,11,10.5,2.6,1.3);
icons.lyBulb=icons.ly1+bulb(C);
icons.lyLock=icons.ly1+r(C,7,9,8,6)+s(C,'M8.500 9V7.500a2.500 2.500 0 0 1 5 0V9',1.3)+r(K,10.5,11,1,2);
icons.lyUnl=icons.ly1+r(Y,6,9,8,6)+s(Y,'M11 9V7.500a2 2 0 0 1 4 0V9',1.3)+r(K,9.5,11,1,2);
icons.layerInfo=p(W,'M5 1h9l-4 3.500H1z')+s(W,'M1 8h8l4-3.500M1 11.500h7',1.8)+k('#3b4554',12,11.5,4.6)+k(W,12,11.5,3.8)+s(K,'M12 11v3M12 8.500v1',1.3);
icons.refs=p(W,'M0 11h7V2h4v5h5v8H0z')+p(H,'M12 2l4 4h-4z')+s('#2f3542','M3 0v12',6)+clip(W)+r(W,0,12,8,3);
icons.sheet=r(W,1,3,14,12)+r('#2f3542',2,4,12,1)+s('#2f3542','M3 7.500h10M3 12.500h10M3 10h10M6.500 6v8M10.500 6v8',1);
icons.shapes=s(W,'M1.500 1.500h6v6h-6zM8 9l3.500 5.500h-7z')+o(W,13.5,6.5,2.6);
icons.gear16=gearRing(8,8,1.45);
// status bar
Object.assign(icons,{
 sGrid:s(W,'M4.500 1v14M8.500 1v14M12.500 1v14M1 4.500h14M1 8.500h14M1 12.500h14',1.1),
 sSnap:[2,7,12].flatMap(x=>[2,7,12].map(y=>r(H,x,y,2,2))).join(''),
 sOrtho:s(W,'M1.500 0v15.500H16M1.500 10.500h5v5',1.1),
 sPolar:s(H,'M13 4a6.500 6.500 0 1 0 1.500 5M7 9.500L14 3M7 9.500h9M12 7v5',1.2)+o(H,7.5,9.5,1.2),
 sDyn:s(H,'M3.500 1v7M0 4.500h7',1.2)+r(H,6,10,10,5)+r('#5c8bc0',7,13,2,1),
 sLw:r(W,0,1,16,2)+r(W,0,6,7,1)+r(W,9,5,7,2)+r(W,0,9,7,2)+r(W,9,9,7,1)+r(W,0,13,12,2),
 sTrans:s(H,'M1.500 1.500h13v13h-13z')+[3,5,7,9,11].flatMap((x,i)=>[3,5,7,9,11].map((y,j)=>(i+j)%2?'':r(H,x,y,2,2))).join(''),
 sCyc:s(H,'M4 1.500H1.500v13H4M11 1.500h2.500V7M4.500 3.500h4v4h-4z')+o(H,6.5,11,2)+p(H,'M8 4l8 8h-4l2 3.500h-2l-2-3-2 2z'),
 sTrack:s(H,'M0 14.500L13 1.500M0 14.500h16',1.1)+r(H,6,7,4,4),
 sOsnap:s(H,'M.500.500h4v4h-4zM5 2.500h10.500v12h-13V5',1.2),
 sAnn:p(H,anno)+k('#628fc3',12.5,3.5,4)+k(H,12.5,3.5,3.2),
 sAuto:p(W,anno)+p(Y,'M13 0L8.500 6h3l-1 4 6-6h-3z'),
 sScale:p(W,anno)
});
const svg=(n,big)=>`<svg class="${big?'size-8':'size-4'} overflow-visible" viewBox="0 0 ${big?'32 32':'16 16'}">${icons[n]}</svg>`;

document.getElementById('toolbar').innerHTML=['newFile open save saveAs','undo redo','print batch pageSetup plotStyle','importF exportF attach webSave compare','zoomWin hand orbit','propsEdit quickSel cloud swapObj purge','magic findRep']
 .map(g=>`<div class="flex">${g.split(' ').map(n=>`<button class="flex w-[33px] justify-center" aria-label="${n}">${svg(n)}</button>`).join('')}</div>`).join('');

// Palette rows: prefix L: = large tool, suffix + = fly-out marker, - = empty cell
const sections=[
 ['Draw','L:line L:pline L:circle+ L:rect+','arc+ spline+ cline+ ray+ ellipse+ rcloud+ trimx+ breakl'],
 ['Hatch','L:hatch L:hatchEdit+ L:gradient bound region wipe'],
 ['Block','L:insert L:create L:editBlk L:editAttr+','tag blkPal blkSave base sync attrM repl'],
 ['Modify','L:move copy rotate L:scissors+ fillet+ array+ mirror stretch offset box','skew align scale trimS+ join order explode broom'],
 ['Text','L:bigA L:styleA under abc tStyle pdfA mtext find tRef pdfW'],
 ['Dimension','L:dimBig L:dimBrush dimLin+ dimDia+ dimOrd dimTot dimCont+ tol dimChk dimX+'],
 ['Leader','L:lead L:leadB lAdd lAlign lBolt - lDel lCol'],
 ['Table','L:table L:tblLink tStyle tblXtr - - tblDn'],
 ['Parametric','L:lcon+ pAuto pY L:lockBig+ pCyc dY pH pC dH dC']
];
const cell=n=>{
 if(n==='-')return '<span></span>';
 const big=n.startsWith('L:'),fly=n.endsWith('+'),id=n.replace('L:','').replace('+','');
 return `<button aria-label="${id}" class="relative flex items-center justify-center ${big?'col-span-2 row-span-2':''} ${id==='dimX'?'bg-[#2f3542]':''}">${svg(id,big)}${fly?'<svg class="absolute right-px bottom-px size-[3px]" viewBox="0 0 3 3"><path fill="#a3a7ae" d="M3 0v3H0z"/></svg>':''}</button>`;
};
document.getElementById('palette').innerHTML=sections.map(([name,...rows],i)=>`<section class="shrink-0 pb-1.5 ${i<8?'border-b border-[#222830]':''}">
 <div class="flex h-[21px] items-center justify-between pt-0.5 pr-px"><h3 class="flex items-center gap-1 text-[10px] text-[#ededed] [text-shadow:0_0_1px_#ededed]"><svg class="h-2 w-[9px]" viewBox="0 0 9 8"><path fill="#fff" d="M0 2h9L4.500 7z"/></svg>${name}</h3>
 <button aria-label="${name} settings"><svg class="size-2.5" viewBox="0 0 10 10">${gearRing(5,5,.95)}</svg></button></div>
 ${rows.map((g,j)=>`<div class="grid auto-rows-[22px] grid-cols-8 ${j?'mt-0.5':''}">${g.split(' ').map(cell).join('')}</div>`).join('')}</section>`).join('');

document.getElementById('layerTools').innerHTML='lyMk lyMatch lyPrev lyIn lyOut lyFrz lyBulb lyLock lyUnl'.split(' ').map(n=>`<button class="flex w-6 items-center justify-center" aria-label="${n}">${svg(n)}</button>`).join('');
const lit=['sSnap','sPolar','sDyn','sTrans','sCyc','sTrack','sOsnap','sAnn'];
document.getElementById('status').innerHTML='sGrid sSnap sOrtho sPolar sDyn sLw sTrans sCyc sTrack sOsnap sAnn sAuto sScale'.split(' ').map(n=>`<button class="flex size-5 items-center justify-center ${lit.includes(n)?'bg-[#628fc3]':''}" aria-label="${n}">${svg(n)}</button>`).join('');
document.querySelectorAll('[data-icon]').forEach(b=>{b.innerHTML=svg(b.dataset.icon)+(b.dataset.icon==='sheet'?'<span class="absolute -top-px right-3.5 size-2.5 rounded-full border border-white bg-[#fd6a35]"></span>':'');});
</script>
</body>
</html>
